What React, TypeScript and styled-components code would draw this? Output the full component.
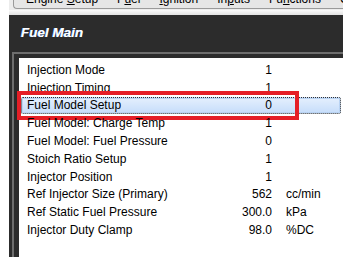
import React from 'react';
import styled, { createGlobalStyle } from 'styled-components';

const GlobalStyle = createGlobalStyle`
  html, body {
    margin: 0;
    padding: 0;
    background: #ffffff;
    overflow: hidden;
  }
`;

const Page = styled.div`
  width: 343px;
  height: 257px;
  padding-left: 9px;
  box-sizing: border-box;
  display: flex;
  flex-direction: column;
  font-family: "Liberation Sans", Arial, sans-serif;
`;

const TopArea = styled.div`
  height: 15px;
  background: linear-gradient(#ececec 0, #ececec 10px, #fafafa 10px, #e2e2e2 15px);
  padding-left: 4px;
  overflow: hidden;
`;

const MenuBar = styled.div`
  height: 8px;
  display: flex;
  border-left: 1px solid #9a9a9a;
  border-bottom: 1px solid #9a9a9a;
  border-bottom-left-radius: 4px;
  background: #e6e6e6;
  padding-left: 12px;
  gap: 19px;
  overflow: hidden;
`;

const MenuItem = styled.span`
  font-size: 12px;
  line-height: 14px;
  color: #000;
  margin-top: -8px;
  white-space: nowrap;

  u {
    text-decoration: underline;
  }
`;

const Panel = styled.div`
  flex: 1;
  background: #2c2c2c;
  display: flex;
  flex-direction: column;
  min-height: 0;
`;

const Title = styled.div`
  height: 37px;
  padding-left: 12px;
  display: flex;
  align-items: center;
  padding-bottom: 3px;
  box-sizing: border-box;
  color: #ffffff;
  font-weight: bold;
  font-style: italic;
  font-size: 13.5px;
  text-shadow: -0.5px 0 0 #7fb4ff;
`;

const Frame = styled.div`
  flex: 1;
  margin-left: 3px;
  border-left: 2px solid #6e6e6e;
  border-top: 2px solid #6e6e6e;
  padding: 4px 0 0 5px;
  display: flex;
  min-height: 0;
`;

const List = styled.div`
  flex: 1;
  background: #ffffff;
  padding: 3px 2px 0 2px;
  display: flex;
  flex-direction: column;
`;

const Row = styled.div<{ $selected?: boolean }>`
  position: relative;
  height: 17.8px;
  box-sizing: border-box;
  display: grid;
  grid-template-columns: 1fr 60px 54px;
  column-gap: 14px;
  align-items: center;
  padding-left: 6px;
  font-size: 12px;
  color: #000;
  border: 1px solid ${p => (p.$selected ? '#333' : 'transparent')};
  border-style: ${p => (p.$selected ? 'dotted' : 'solid')};
  border-radius: 2px;
  background: ${p => (p.$selected ? 'linear-gradient(#e4effd, #c6ddfa)' : 'transparent')};
  box-shadow: ${p => (p.$selected ? 'inset 0 0 0 1px #b9d3f3' : 'none')};
`;

const Label = styled.span`
  white-space: nowrap;
  margin-left: -1px;
`;

const Value = styled.span`
  text-align: right;
`;

const Unit = styled.span`
  white-space: nowrap;
`;

const Marker = styled.div`
  position: absolute;
  left: -5px;
  top: -7px;
  bottom: -7px;
  width: 282px;
  border: 4px solid #e51e26;
  box-sizing: border-box;
  pointer-events: none;
`;

type Item = { label: string; value: string; unit?: string; selected?: boolean };

const items: Item[] = [
  { label: 'Injection Mode', value: '1' },
  { label: 'Injection Timing', value: '1' },
  { label: 'Fuel Model Setup', value: '0', selected: true },
  { label: 'Fuel Model: Charge Temp', value: '1' },
  { label: 'Fuel Model: Fuel Pressure', value: '0' },
  { label: 'Stoich Ratio Setup', value: '1' },
  { label: 'Injector Position', value: '1' },
  { label: 'Ref Injector Size (Primary)', value: '562', unit: 'cc/min' },
  { label: 'Ref Static Fuel Pressure', value: '300.0', unit: 'kPa' },
  { label: 'Injector Duty Clamp', value: '98.0', unit: '%DC' },
];

const App: React.FC = () => {
  return (
    <>
      <GlobalStyle />
      <Page>
        <TopArea>
          <MenuBar>
            <MenuItem>Engine <u>S</u>etup</MenuItem>
            <MenuItem>F<u>u</u>el</MenuItem>
            <MenuItem><u>I</u>gnition</MenuItem>
            <MenuItem>In<u>p</u>uts</MenuItem>
            <MenuItem>Fu<u>n</u>ctions</MenuItem>
            <MenuItem>Co<u>m</u>ms</MenuItem>
          </MenuBar>
        </TopArea>
        <Panel>
          <Title>Fuel Main</Title>
          <Frame>
            <List>
              {items.map(it => (
                <Row key={it.label} $selected={it.selected}>
                  <Label>{it.label}</Label>
                  <Value>{it.value}</Value>
                  <Unit>{it.unit ?? ''}</Unit>
                  {it.selected && <Marker />}
                </Row>
              ))}
            </List>
          </Frame>
        </Panel>
      </Page>
    </>
  );
};

export default App;
